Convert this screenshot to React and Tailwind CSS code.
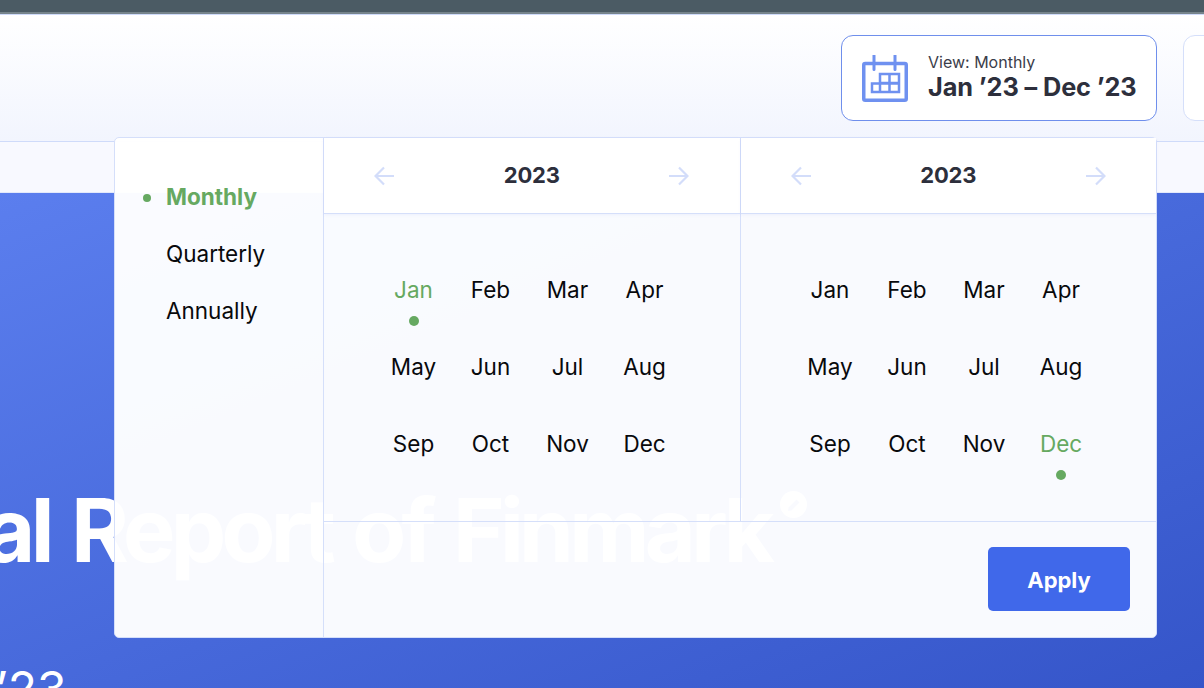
const font = { fontFamily: 'Inter, "Noto Sans", sans-serif' };

const months = ['Jan', 'Feb', 'Mar', 'Apr', 'May', 'Jun', 'Jul', 'Aug', 'Sep', 'Oct', 'Nov', 'Dec'];

function CalendarIcon() {
  return (
    <svg width="46" height="47" viewBox="0 0 46 47" fill="none" stroke="#6f91f0" strokeWidth="3.500" className="shrink-0">
      <rect x="1.750" y="8.500" width="42.500" height="36.750" rx="1.500" />
      <path d="M12 0.500v14M33 0.500v14" strokeLinecap="round" strokeWidth="3" />
      <path d="M10 37V28.500h27V37zM18 37V19h19v18M18 28h19M27.500 19v18" strokeWidth="2.500" />
    </svg>
  );
}

function Arrow({ right }) {
  return (
    <svg width="20" height="20" viewBox="0 0 20 20" fill="none" stroke="#d3ddfa" strokeWidth="2.200" className={right ? 'rotate-180' : ''}>
      <path d="M20 10H1.500M10 1.500L1.500 10l8.500 8.500" />
    </svg>
  );
}

function PencilBadge() {
  return (
    <div className="w-[27px] h-[27px] rounded-full bg-white flex items-center justify-center shrink-0 self-start ml-[10px] mt-[11px]">
      <svg width="14" height="14" viewBox="0 0 14 14" fill="#4f70e0">
        <path d="M1 13l.5-3.500L9.500 1.500l3 3-8 8z" />
      </svg>
    </div>
  );
}

function YearPanel({ first, last, withBorder }) {
  return (
    <div className={'flex-1 flex flex-col ' + (withBorder ? 'border-r border-[#d5dffa]' : '')}>
      <div className="h-[76px] flex items-center justify-between px-[50px] border-b border-[#d5dffa] bg-white shadow-[0_1px_3px_rgba(90,120,230,0.08)]">
        <Arrow />
        <span className="text-[22px] font-bold tracking-[-0.200px] text-[#2d2f3c]">2023</span>
        <Arrow right />
      </div>
      <div className="flex-1 pl-[51px] pt-[37px]">
        <div className="grid grid-cols-[repeat(4,77px)] auto-rows-[77px]">
          {months.map((m, i) => {
            const active = i === first || i === last;
            return (
              <div key={m} className={'flex flex-col items-center justify-center relative text-[22.500px] ' + (active ? 'text-[#66a961]' : 'text-[#08090c]')}>
                {m}
                {active && <span className="absolute bottom-[2.500px] w-[10px] h-[10px] rounded-full bg-[#66a961]" />}
              </div>
            );
          })}
        </div>
      </div>
    </div>
  );
}

export default function App() {
  return (
    <div style={font} className="relative w-[1204px] h-[688px] overflow-hidden flex flex-col bg-white">
      <div className="h-[14px] shrink-0 bg-[#4b5b64] border-b-2 border-[#76848b]" />
      <header className="h-[128px] shrink-0 border-t border-[#cfdbfa] border-b bg-gradient-to-b from-white to-[#f2f5fe] flex items-center justify-end gap-[26px] -mr-[100px]">
        <button className="w-[316px] h-[86px] rounded-[12px] border border-[#6f8fec] bg-white flex items-center gap-[20px] pl-[20px] text-left">
          <CalendarIcon />
          <div>
            <div className="text-[16px] leading-[17px] text-[#3b3d4a]">View: Monthly</div>
            <div className="text-[25.300px] leading-[32px] font-bold tracking-[-0.100px] text-[#2d2f3c] whitespace-nowrap">Jan ’23 – Dec ’23</div>
          </div>
        </button>
        <div className="w-[121px] h-[86px] rounded-[12px] border border-[#d5dffa] bg-white" />
      </header>
      <div className="h-[51px] shrink-0 bg-[#f8f9ff] border-b border-[#e3e9fb]" />
      <main className="flex-1 min-h-0 bg-gradient-to-br from-[#5b7eee] to-[#3555c9] text-white relative">
        <div className="w-[1204px] flex pt-[287px]">
          <div className="w-[770px] flex justify-end shrink-0">
            <h1 className="text-[88px] leading-[100px] font-bold tracking-[-4.700px] [word-spacing:5px] whitespace-nowrap">Financial Report of Finmark</h1>
          </div>
          <PencilBadge />
        </div>
        <div className="text-[48px] leading-[56px] mt-[81px] -ml-[327px] whitespace-nowrap">Jan ’23 – Dec ’23</div>
      </main>

      <div className="absolute left-[114px] top-[137px] w-[1043px] h-[501px] rounded-[5px] border border-[#d5dffa] bg-white/[.97] flex">
        <div className="w-[209px] shrink-0 border-r border-[#d5dffa] pl-[51px] pt-[44px] text-[22.500px] text-[#08090c] flex flex-col">
          <div className="h-[30px] leading-[30px] mb-[27px] relative font-bold text-[#66a961]">
            <span className="absolute left-[-23px] top-[12px] w-[8px] h-[8px] rounded-full bg-[#66a961]" />
            Monthly
          </div>
          <div className="h-[30px] leading-[30px] mb-[27px]">Quarterly</div>
          <div className="h-[30px] leading-[30px]">Annually</div>
        </div>
        <div className="flex-1 flex flex-col">
          <div className="h-[384px] flex shrink-0 border-b border-[#d5dffa]">
            <YearPanel first={0} last={-1} withBorder />
            <YearPanel first={-1} last={11} />
          </div>
          <div className="flex-1 flex items-start justify-end pt-[25px] pr-[26px]">
            <button className="w-[142px] h-[64px] pt-[3px] rounded-[5px] bg-[#4068ea] text-white text-[22px] font-bold">Apply</button>
          </div>
        </div>
      </div>
    </div>
  );
}
